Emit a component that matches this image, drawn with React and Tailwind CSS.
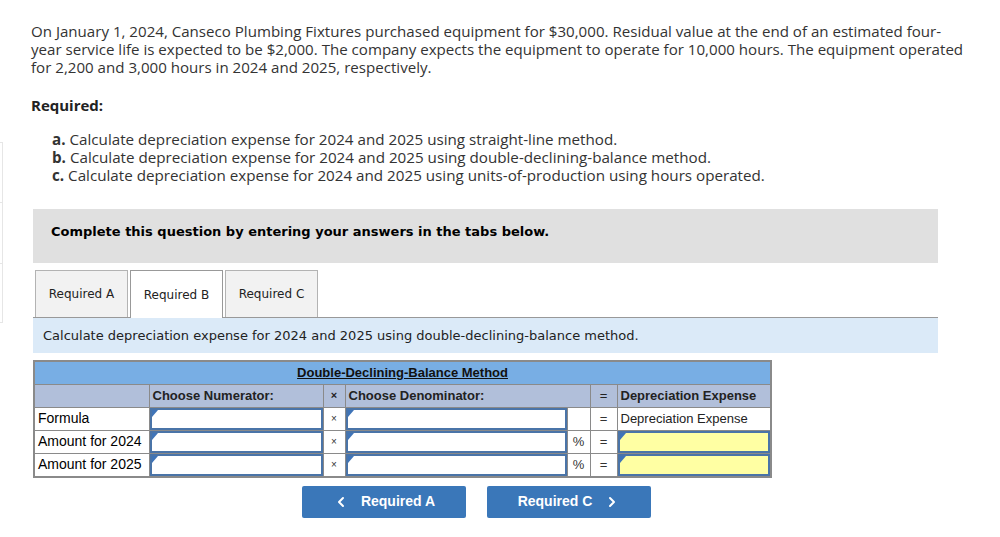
import { ChevronLeft, ChevronRight } from "lucide-react";

const sans = { fontFamily: "'Open Sans', sans-serif" };

function Corner() {
  return (
    <span className="absolute left-0 top-0 h-0 w-0 border-t-[7px] border-r-[6px] border-t-[#3f74b8] border-r-transparent" />
  );
}

function InputCell({ yellow }) {
  return (
    <td className="border border-[#8a8a8a] p-0 h-[23px]">
      <div className={`relative h-[22px] border-2 border-[#4a74a8] ${yellow ? "bg-[#ffffa3]" : "bg-white"}`}>
        <Corner />
      </div>
    </td>
  );
}

function Row({ label, pct, last }) {
  return (
    <tr className="h-[23px]">
      <td className="border border-[#8a8a8a] bg-white px-[3px] text-[14px] text-black">{label}</td>
      <InputCell />
      <td className="border border-[#8a8a8a] bg-white text-center text-[10px] text-[#333]">×</td>
      <InputCell />
      <td className="border border-[#8a8a8a] bg-white text-center text-[13px] text-[#333]">{pct ? "%" : ""}</td>
      <td className="border border-[#8a8a8a] bg-white text-center text-[13px] text-[#333]">=</td>
      {last ? (
        <InputCell yellow />
      ) : (
        <td className="border border-[#8a8a8a] bg-white px-[3px] text-[13px] text-[#222]">Depreciation Expense</td>
      )}
    </tr>
  );
}

export default function App() {
  return (
    <div className="relative min-h-[537px] w-[1000px] bg-white">
      <div className="absolute left-0 top-[142px] flex h-[181px] w-[3px] flex-col border-r border-[#e6e6e6]">
        <div className="h-[61px] border-b border-t border-[#e6e6e6]" />
        <div className="h-[61px] border-b border-[#e6e6e6]" />
        <div className="flex-1 border-b border-[#e6e6e6]" />
      </div>

      <div className="pl-[31px] pt-[22px] text-[#333]" style={sans}>
        <p className="whitespace-nowrap text-[15.1px] leading-[18px]">
          On January 1, 2024, Canseco Plumbing Fixtures purchased equipment for $30,000. Residual value at the end of an estimated four-
          <br />
          year service life is expected to be $2,000. The company expects the equipment to operate for 10,000 hours. The equipment operated
          <br />
          for 2,200 and 3,000 hours in 2024 and 2025, respectively.
        </p>
        <p className="mt-[20px] text-[15px] font-bold leading-[18px] text-[#222]">Required:</p>
        <ul className="mt-[16px] pl-[21px] text-[15.2px] leading-[18px]">
          <li><b>a.</b> Calculate depreciation expense for 2024 and 2025 using straight-line method.</li>
          <li><b>b.</b> Calculate depreciation expense for 2024 and 2025 using double-declining-balance method.</li>
          <li><b>c.</b> Calculate depreciation expense for 2024 and 2025 using units-of-production using hours operated.</li>
        </ul>
      </div>

      <div className="ml-[33px] w-[905px]" style={{ fontFamily: "'DejaVu Sans', Verdana, sans-serif" }}>
        <div className="mt-[25px] h-[54px] bg-[#e0e0e0] pl-[18px] pt-[15px] text-[13px] font-bold leading-[16px] text-black">
          Complete this question by entering your answers in the tabs below.
        </div>
        <div className="mt-[7px] flex gap-[2px] border-b border-[#999] pl-[2px]">
          <div className="flex h-[47px] w-[93px] items-center justify-center border border-b-0 border-[#b3b3b3] bg-[#f2f2f2] text-[12px] text-[#222]">Required A</div>
          <div className="-mb-px flex h-[48px] w-[93px] items-center justify-center border border-b-0 border-[#999] bg-white text-[12px] text-[#222]">Required B</div>
          <div className="flex h-[47px] w-[93px] items-center justify-center border border-b-0 border-[#b3b3b3] bg-[#f2f2f2] text-[12px] text-[#222]">Required C</div>
        </div>
        <div className="flex h-[35px] items-center bg-[#dbeaf8] pl-[10px] pt-px text-[13px] text-[#222]">
          Calculate depreciation expense for 2024 and 2025 using double-declining-balance method.
        </div>
      </div>

      <table
        className="ml-[33px] mt-[7px] w-[737px] table-fixed border-collapse border-2 border-[#8a8a8a]"
        style={{ fontFamily: "'Liberation Sans', Arial, sans-serif" }}
      >
        <colgroup>
          <col className="w-[115px]" />
          <col className="w-[174px]" />
          <col className="w-[22px]" />
          <col className="w-[222px]" />
          <col className="w-[23px]" />
          <col className="w-[27px]" />
          <col className="w-[154px]" />
        </colgroup>
        <tbody>
          <tr className="h-[23px] bg-[#78aee4]">
            <td colSpan={7} className="border border-[#8a8a8a] text-center text-[13px] font-bold text-[#111] underline">
              Double-Declining-Balance Method
            </td>
          </tr>
          <tr className="h-[23px] bg-[#b1bfda] text-[13px] font-bold text-[#222]">
            <td className="border border-[#8a8a8a]" />
            <td className="border border-[#8a8a8a] px-[3px]">Choose Numerator:</td>
            <td className="border border-[#8a8a8a] text-center text-[11px]">×</td>
            <td className="border border-[#8a8a8a] px-[3px]" colSpan={2}>Choose Denominator:</td>
            <td className="border border-[#8a8a8a] text-center font-normal">=</td>
            <td className="border border-[#8a8a8a] px-[3px]">Depreciation Expense</td>
          </tr>
          <Row label="Formula" />
          <Row label="Amount for 2024" pct last />
          <Row label="Amount for 2025" pct last />
        </tbody>
      </table>

      <div className="mt-[8px] flex justify-center gap-[21px] pr-[47px]" style={{ fontFamily: "'Liberation Sans', Arial, sans-serif" }}>
        <button className="flex h-[32px] w-[164px] items-center justify-center gap-[12px] rounded-[2px] bg-[#3a77b9] text-[14px] font-bold text-white">
          <ChevronLeft className="h-4 w-4" strokeWidth={3} />
          Required A
        </button>
        <button className="flex h-[32px] w-[164px] items-center justify-center gap-[12px] rounded-[2px] bg-[#3a77b9] text-[14px] font-bold text-white">
          Required C
          <ChevronRight className="h-4 w-4" strokeWidth={3} />
        </button>
      </div>
    </div>
  );
}
